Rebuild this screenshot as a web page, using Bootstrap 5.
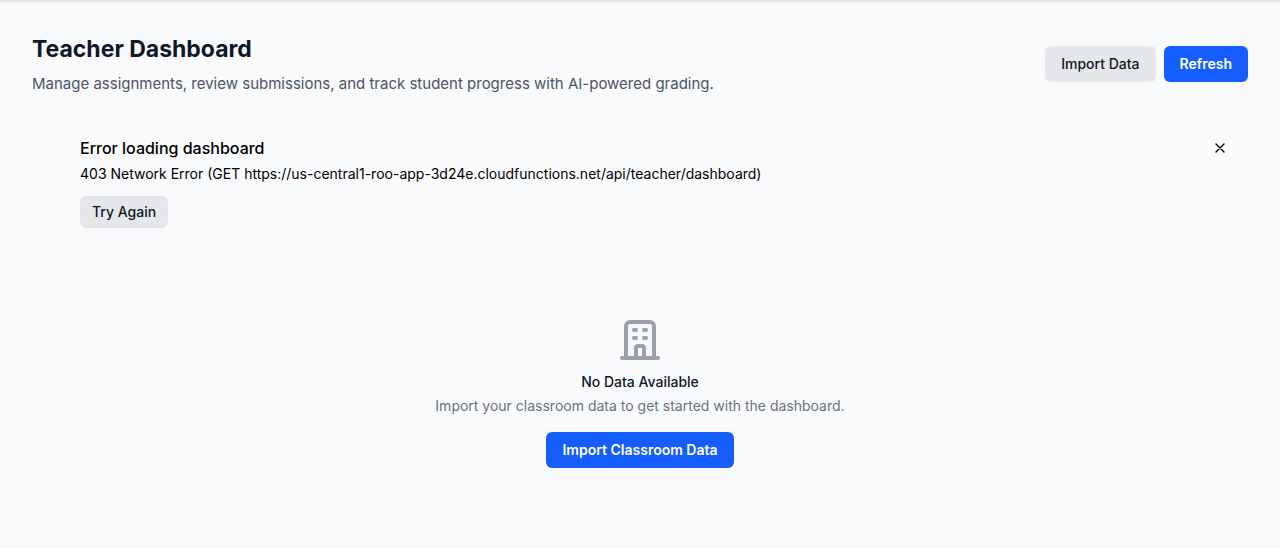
<!DOCTYPE html>
<html lang="en">
<head>
<meta charset="utf-8">
<meta name="viewport" content="width=device-width, initial-scale=1">
<title>Teacher Dashboard</title>
<link href="https://cdn.jsdelivr.net/npm/bootstrap@5.3.0/dist/css/bootstrap.min.css" rel="stylesheet">
<style>
  body { font-family: Inter, "Liberation Sans", sans-serif; font-size: 14px; line-height: 20px; background: #f9fafc; color: #101828; }
  .top-edge { height: 0; box-shadow: 0 0 3px 1px rgba(0,0,0,.2); }
  .page { padding: 32px 32px 80px; }
  .page-title { font-size: 23px; line-height: 34px; font-weight: 700; margin-bottom: 6px; }
  .page-lead { font-size: 15px; line-height: 24px; color: #4a5565; }
  .btn { font-size: 14px; line-height: 20px; font-weight: 500; border: 0; border-radius: 6px; padding: 8px 16px; }
  .btn-compact { padding: 6px 12px; }
  .btn-primary { --bs-btn-bg: #155dfc; --bs-btn-hover-bg: #1447e6; font-weight: 600; }
  .btn-soft { --bs-btn-bg: #e5e7eb; --bs-btn-color: #101828; --bs-btn-hover-bg: #d1d5dc; }
  .error-box { margin-top: 24px; padding: 16px 16px 16px 48px; color: #000; }
  .error-title { font-size: 16px; line-height: 24px; font-weight: 500; margin-bottom: 4px; }
  .btn-dismiss { --bs-btn-color: #000; padding: 4px; line-height: 0; }
  .empty-state { padding-top: 72px; }
  .empty-title { font-size: 14px; line-height: 20px; font-weight: 500; margin: 8px 0 4px; }
  .empty-text { color: #6a7282; margin-bottom: 16px; }
</style>
</head>
<body>
<div class="top-edge"></div>
<main class="page">
  <header class="d-flex flex-wrap justify-content-between align-items-center gap-2">
    <div>
      <h1 class="page-title">Teacher Dashboard</h1>
      <p class="page-lead mb-0">Manage assignments, review submissions, and track student progress with AI-powered grading.</p>
    </div>
    <div class="d-flex gap-2">
      <button type="button" class="btn btn-soft">Import Data</button>
      <button type="button" class="btn btn-primary">Refresh</button>
    </div>
  </header>
  <section class="error-box d-flex justify-content-between align-items-start" role="alert">
    <div>
      <h2 class="error-title">Error loading dashboard</h2>
      <p class="mb-2 pb-1">403 Network Error (GET https://us-central1-roo-app-3d24e.cloudfunctions.net/api/teacher/dashboard)</p>
      <button type="button" class="btn btn-soft btn-compact">Try Again</button>
    </div>
    <button type="button" class="btn btn-dismiss" aria-label="Dismiss">
      <svg width="16" height="16" viewBox="0 0 24 24" fill="none" stroke="currentColor" stroke-width="2" stroke-linecap="round" stroke-linejoin="round"><path d="M18 6 6 18M6 6l12 12"/></svg>
    </button>
  </section>
  <section class="empty-state text-center">
    <svg width="48" height="48" viewBox="0 0 24 24" fill="none" stroke="#99a1af" stroke-width="2" stroke-linecap="round" stroke-linejoin="round" aria-hidden="true"><path d="M19 21V5a2 2 0 0 0-2-2H7a2 2 0 0 0-2 2v16m14 0h2m-2 0h-5m-9 0H3m2 0h5M9 7h1m-1 4h1m4-4h1m-1 4h1m-5 10v-5a1 1 0 0 1 1-1h2a1 1 0 0 1 1 1v5m-4 0h4"/></svg>
    <h2 class="empty-title">No Data Available</h2>
    <p class="empty-text">Import your classroom data to get started with the dashboard.</p>
    <button type="button" class="btn btn-primary">Import Classroom Data</button>
  </section>
</main>
<script src="https://cdn.jsdelivr.net/npm/bootstrap@5.3.0/dist/js/bootstrap.bundle.min.js"></script>
</body>
</html>
